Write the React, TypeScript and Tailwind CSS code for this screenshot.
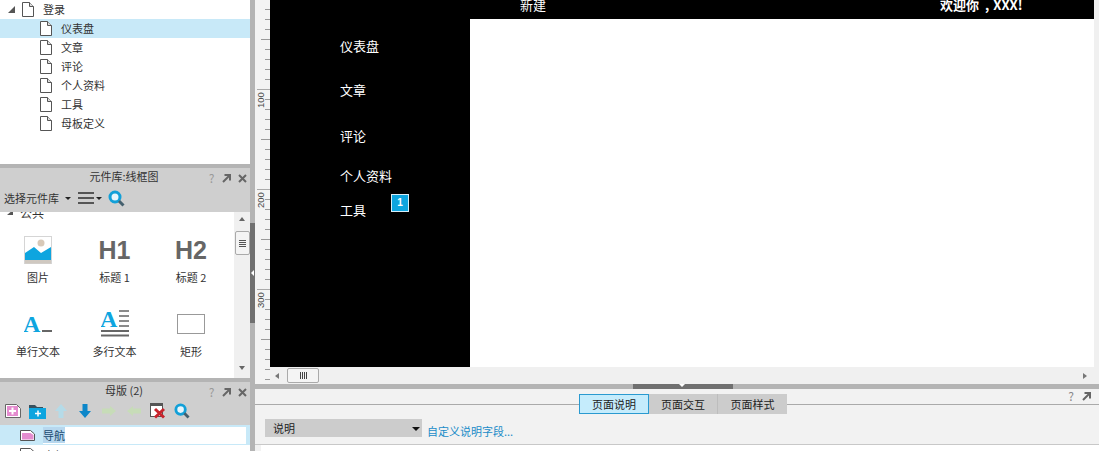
import React from "react";

const Page = ({ className = "" }: { className?: string }) => (
  <svg width="12" height="15" viewBox="0 0 12 15" className={className}>
    <path d="M.5.5h7l4 4v10H.5z" fill="#fff" stroke="#555" />
    <path d="M7.5.5v4h4" fill="#ddd" stroke="#555" />
  </svg>
);

const PinkPage = () => (
  <svg width="15" height="11" viewBox="0 0 15 11">
    <path d="M.5.500h10l4 3.500v6.500H.5z" fill="#fff" stroke="#555" />
    <path d="M2 3h8.500l3 2v4.500H2z" fill="#e48ccf" />
  </svg>
);

const Search = ({ size = 17 }: { size?: number }) => (
  <svg width={size} height={size} viewBox="0 0 17 17">
    <circle cx="7" cy="7" r="5" fill="#e8f6fc" stroke="#12a0d8" strokeWidth="3" />
    <path d="M11 11l4.500 4.500" stroke="#45606e" strokeWidth="3" />
  </svg>
);

const PanelIcons = () => (
  <div className="flex items-center gap-[6px]">
    <span className="w-[9px] text-center text-[12px] leading-none text-[#999]">?</span>
    <svg width="9" height="9" viewBox="0 0 9 9"><path d="M1 8l6-6M2.500 1H8v5.500" fill="none" stroke="#666" strokeWidth="2" /></svg>
    <svg width="9" height="9" viewBox="0 0 9 9" className="ml-[1px]"><path d="M1 1l7 7M8 1L1 8" stroke="#666" strokeWidth="2" /></svg>
  </div>
);

const Caret = () => <span className="h-0 w-0 border-x-[3px] border-t-[3px] border-x-transparent border-t-[#222]" />;

const ImageIcon = () => (
  <svg width="28" height="28" viewBox="0 0 28 28">
    <rect x=".5" y=".5" width="27" height="27" fill="#fff" stroke="#d5d5d5" />
    <circle cx="17" cy="7" r="3.500" fill="#d8c9b8" />
    <path d="M1 17L10 11 17 17 27 11V24H1z" fill="#0ea5df" />
    <rect x="1" y="24" width="26" height="3.500" fill="#cfc8c0" />
  </svg>
);

const TextIcon = () => (
  <svg width="28" height="20" viewBox="0 0 28 20">
    <text x="-1" y="18" fontFamily="'Liberation Serif',serif" fontWeight="700" fontSize="24" fill="#0ea5df">A</text>
    <rect x="18" y="16" width="10" height="2" fill="#666" />
  </svg>
);

const ParaIcon = () => (
  <svg width="28" height="28" viewBox="0 0 28 28">
    <text x="-1" y="17" fontFamily="'Liberation Serif',serif" fontWeight="700" fontSize="24" fill="#0ea5df">A</text>
    <path d="M18 1h10M18 6h10M18 11h10M18 16h10" stroke="#666" strokeWidth="1.500" />
    <path d="M0 21h28M0 25.500h28" stroke="#666" strokeWidth="2" />
  </svg>
);

const Ruler = () => {
  const ticks = Array.from({ length: 38 }, (_, i) => 9 + i * 10);
  return (
    <svg width="15" height="384" viewBox="0 0 15 384" className="block">
      <rect width="15" height="384" fill="#f3f3f3" />
      {ticks.map((y) => {
        const major = (y - 89) % 100 === 0;
        const mid = (y - 39) % 50 === 0;
        return <path key={y} d={`M${major ? 2 : mid ? 6 : 10} ${y + 0.5}H15`} stroke={major ? "#aaa" : "#999"} />;
      })}
      {[100, 200, 300].map((n) => (
        <text key={n} x="0" y="0" transform={`translate(8.500 ${n + 8}) rotate(-90)`} fontFamily="'Liberation Sans',sans-serif" fontSize="9.500" fill="#444">{n}</text>
      ))}
    </svg>
  );
};

const treeItems = ["文章", "评论", "个人资料", "工具", "母板定义"];

const widgets = [
  { label: "图片", icon: <ImageIcon /> },
  { label: "标题 1", icon: <span className="font-['Liberation_Sans',sans-serif] text-[25px] font-bold leading-none text-[#666]">H1</span> },
  { label: "标题 2", icon: <span className="font-['Liberation_Sans',sans-serif] text-[25px] font-bold leading-none text-[#666]">H2</span> },
  { label: "单行文本", icon: <TextIcon /> },
  { label: "多行文本", icon: <ParaIcon /> },
  { label: "矩形", icon: <span className="block h-[20px] w-[28px] border border-[#999] bg-white" /> },
];

const navItems: [string, string][] = [
  ["仪表盘", "mt-[18px]"],
  ["文章", "mt-[26px]"],
  ["评论", "mt-[28px]"],
  ["个人资料", "mt-[22px]"],
  ["工具", "mt-[16px]"],
];

export default function App() {
  return (
    <div className="flex h-[451px] w-[1099px] overflow-hidden bg-white font-['Noto_Sans_CJK_SC',sans-serif] text-[11px] text-[#333]">
      {/* Left column */}
      <div className="flex w-[250px] shrink-0 flex-col">
        <div className="h-[164px] shrink-0 bg-white">
          <div className="flex h-[19px] items-center pl-[8px]">
            <span className="h-0 w-0 border-b-[7px] border-l-[7px] border-b-[#555] border-l-transparent" />
            <Page className="ml-[7px]" />
            <span className="-mt-[1px] ml-[9px]">登录</span>
          </div>
          <div className="flex h-[19px] items-center bg-[#c8e9f8] pl-[40px]">
            <Page />
            <span className="-mt-[1px] ml-[9px]">仪表盘</span>
          </div>
          {treeItems.map((t) => (
            <div key={t} className="flex h-[19px] items-center pl-[40px]">
              <Page />
              <span className="-mt-[1px] ml-[9px]">{t}</span>
            </div>
          ))}
        </div>
        <div className="h-[4px] shrink-0 bg-[#b4b4b4]" />
        <div className="h-[44px] shrink-0 bg-[#cfcfcf]">
          <div className="relative flex h-[16px] items-center justify-center pr-[2px]">
            <span>元件库:线框图</span>
            <span className="absolute left-[207px] top-[4px]"><PanelIcons /></span>
          </div>
          <div className="flex h-[28px] items-center pl-[4px]">
            <span>选择元件库</span>
            <span className="ml-[6px] flex"><Caret /></span>
            <span className="ml-[7px] flex flex-col gap-[3px]">
              <span className="block h-[2px] w-[16px] bg-[#555]" />
              <span className="block h-[2px] w-[16px] bg-[#555]" />
              <span className="block h-[2px] w-[16px] bg-[#555]" />
            </span>
            <span className="ml-[2px] flex"><Caret /></span>
            <span className="ml-[6px] flex"><Search /></span>
          </div>
        </div>
        <div className="flex h-[166px] shrink-0 bg-white">
          <div className="w-[234px] overflow-hidden">
            <div className="-mt-[7px] flex h-[15px] items-center pl-[7px]">
              <span className="h-0 w-0 border-b-[5px] border-l-[6px] border-b-[#555] border-l-transparent" />
              <span className="ml-[7px] text-[12px] leading-[15px]">公共</span>
            </div>
            <div className="grid grid-cols-[76px_77px_76px] pt-[6px]">
              {widgets.map((w) => (
                <div key={w.label} className="flex h-[74px] flex-col items-center">
                  <div className="flex h-[43px] items-center justify-center pt-[5px]">{w.icon}</div>
                  <span className="mt-[1px] leading-[14px]">{w.label}</span>
                </div>
              ))}
            </div>
          </div>
          <div className="flex w-[16px] flex-col items-center bg-[#f0f0f0]">
            <span className="mt-[5px] h-0 w-0 border-x-[3px] border-b-[4px] border-x-transparent border-b-[#666]" />
            <div className="mt-[10px] flex h-[24px] w-[15px] items-center justify-center rounded-[2px] border border-[#aaa] bg-[#f4f4f4]">
              <span className="flex flex-col gap-[1px]">
                <span className="block h-[1px] w-[7px] bg-[#555]" />
                <span className="block h-[1px] w-[7px] bg-[#555]" />
                <span className="block h-[1px] w-[7px] bg-[#555]" />
                <span className="block h-[1px] w-[7px] bg-[#555]" />
              </span>
            </div>
            <span className="mt-auto mb-[8px] h-0 w-0 border-x-[3px] border-t-[4px] border-x-transparent border-t-[#666]" />
          </div>
        </div>
        <div className="h-[4px] shrink-0 bg-[#b4b4b4]" />
        <div className="h-[43px] shrink-0 bg-[#cfcfcf]">
          <div className="relative flex h-[17px] items-center justify-center pr-[2px]">
            <span>母版 (2)</span>
            <span className="absolute left-[207px] top-[4px]"><PanelIcons /></span>
          </div>
          <div className="flex h-[24px] items-center pl-[5px]">
            <svg width="16" height="14" viewBox="0 0 16 14"><path d="M.5.5h11l4 4v9H.5z" fill="#fff" stroke="#666" /><rect x="2" y="2" width="11" height="10" fill="#e48ccf" /><path d="M7.500 3.500v7M4 7h7" stroke="#fff" strokeWidth="2" /></svg>
            <svg width="17" height="15" viewBox="0 0 17 15" className="ml-[8px]"><path d="M0 1h6l2 2h6v2H0z" fill="#37505e" /><rect y="4" width="17" height="11" fill="#0ea5df" /><path d="M9 6.500v6M6 9.500h6" stroke="#fff" strokeWidth="1.500" /></svg>
            <svg width="12" height="14" viewBox="0 0 12 14" className="ml-[9px]"><path d="M6 0l6 7H8.500v7h-5V7H0z" fill="#b5dbe8" /></svg>
            <svg width="12" height="14" viewBox="0 0 12 14" className="ml-[12px]"><path d="M3.500 0h5v7H12l-6 7-6-7h3.500z" fill="#0d87c9" /></svg>
            <svg width="14" height="10" viewBox="0 0 14 10" className="ml-[11px]"><path d="M0 2.500h8V0l6 5-6 5V7.500H0z" fill="#c7dcb8" /></svg>
            <svg width="14" height="10" viewBox="0 0 14 10" className="ml-[11px]"><path d="M14 2.500H6V0L0 5l6 5V7.500h8z" fill="#c7dcb8" /></svg>
            <svg width="16" height="16" viewBox="0 0 16 16" className="ml-[9px]"><rect x=".5" y=".5" width="12" height="13" fill="#fff" stroke="#555" /><rect width="13" height="3" fill="#555" /><path d="M5 6l9 8.500M14 6l-9 8.500" stroke="#c8242c" strokeWidth="3" /></svg>
            <span className="ml-[8px] flex"><Search size={16} /></span>
          </div>
        </div>
        <div className="flex h-[20px] shrink-0 items-center bg-[#c8e9f8] pl-[20px]">
          <PinkPage />
          <div className="ml-[8px] flex h-[17px] w-[203px] items-center bg-white">
            <span className="bg-[#b7d7ee] text-[#1a4a70]">导航</span>
          </div>
        </div>
        <div className="flex h-[19px] shrink-0 items-start bg-white pl-[20px] pt-[3px]">
          <PinkPage />
          <span className="-mt-[1px] ml-[8px]">底部</span>
        </div>
      </div>

      {/* Divider */}
      <div className="flex w-[5px] shrink-0 flex-col bg-[#b4b4b4]">
        <div className="relative mt-[223px] h-[100px] bg-[#707070]">
          <span className="absolute left-[1px] top-[47px] h-0 w-0 border-y-[3px] border-r-[3px] border-y-transparent border-r-white" />
        </div>
      </div>

      {/* Right column */}
      <div className="flex min-w-0 flex-1 flex-col">
        <div className="flex h-[384px] shrink-0">
          <Ruler />
          <div className="flex min-w-0 flex-1 flex-col">
            <div className="flex h-[367px] shrink-0">
              <div className="relative flex w-[824px] flex-col bg-black text-[13px] text-white">
                <div className="flex h-[19px] shrink-0 overflow-hidden bg-black">
                  <span className="-mt-[5px] ml-[250px] leading-[20px]">新建</span>
                  <span className="-mt-[5px] ml-[394px] font-bold leading-[20px]">欢迎你<span className="ml-[6px] mr-[4px]">,</span>XXX!</span>
                </div>
                <div className="flex min-h-0 flex-1">
                  <div className="flex w-[200px] flex-col bg-black pl-[70px]">
                    {navItems.map(([t, m]) => (
                      <span key={t} className={`${m} leading-[18px]`}>{t}</span>
                    ))}
                  </div>
                  <div className="flex-1 bg-white" />
                </div>
                <span className="absolute left-[121px] top-[194px] flex h-[18px] w-[18px] items-center justify-center border border-[#d8eef8] bg-[#0ea5df] font-['Liberation_Sans',sans-serif] text-[10px] font-bold leading-none text-white">1</span>
              </div>
              <div className="w-[5px] bg-[#f0f0f0]" />
            </div>
            <div className="flex h-[17px] shrink-0 items-center bg-[#f0f0f0]">
              <span className="ml-[5px] h-0 w-0 border-y-[3px] border-r-[4px] border-y-transparent border-r-[#777]" />
              <span className="ml-[8px] flex h-[15px] w-[32px] items-center justify-center gap-[1px] rounded-[2px] border border-[#aaa] bg-[#f4f4f4]">
                <span className="h-[7px] w-[1px] bg-[#444]" />
                <span className="h-[7px] w-[1px] bg-[#444]" />
                <span className="h-[7px] w-[1px] bg-[#444]" />
                <span className="h-[7px] w-[1px] bg-[#444]" />
              </span>
              <span className="ml-auto mr-[12px] h-0 w-0 border-y-[3px] border-l-[4px] border-y-transparent border-l-[#777]" />
            </div>
          </div>
        </div>

        {/* Horizontal splitter */}
        <div className="relative flex h-[5px] shrink-0 justify-center bg-[#b4b4b4]">
          <div className="ml-[378px] mr-[366px] h-[5px] w-[100px] shrink-0 bg-[#707070]" />
          <span className="absolute left-[424px] top-0 h-0 w-0 border-x-[3px] border-t-[3px] border-x-transparent border-t-white" />
        </div>

        {/* Bottom panel */}
        <div className="flex min-h-0 flex-1 flex-col bg-[#f2f2f2]">
          <div className="relative mt-[15px] h-[1px] shrink-0 bg-[#aaaaaa]">
            <div className="absolute left-[324px] top-[-10px] flex h-[20px] bg-[#cccccc] text-[11px] text-[#222]">
              <span className="flex w-[70px] items-center justify-center border border-[#2a9ad0] bg-[#c5ecfc]">页面说明</span>
              <span className="flex w-[69px] items-center justify-center border-r border-[#bdbdbd]">页面交互</span>
              <span className="flex w-[69px] items-center justify-center">页面样式</span>
            </div>
            <div className="absolute right-[8px] top-[-14px] flex items-center gap-[8px]">
              <span className="text-[12px] leading-none text-[#888]">?</span>
              <svg width="9" height="9" viewBox="0 0 9 9"><path d="M1 8l6-6M2.500 1H8v5.500" fill="none" stroke="#666" strokeWidth="2" /></svg>
            </div>
          </div>
          <div className="flex h-[39px] shrink-0 items-start pl-[10px] pt-[14px]">
            <div className="flex h-[18px] w-[157px] items-center justify-between bg-[#cccccc] pl-[8px] pr-[2px] text-[#222]">
              <span>说明</span>
              <span className="mt-[2px] h-0 w-0 border-x-[4px] border-t-[4px] border-x-transparent border-t-[#111]" />
            </div>
            <span className="ml-[5px] mt-[4px] leading-[16px] text-[#1a8cc8]">自定义说明字段...</span>
          </div>
          <div className="h-[1px] shrink-0 bg-[#c8c8c8]" />
          <div className="ml-[6px] flex-1 bg-white" />
        </div>
      </div>
    </div>
  );
}
